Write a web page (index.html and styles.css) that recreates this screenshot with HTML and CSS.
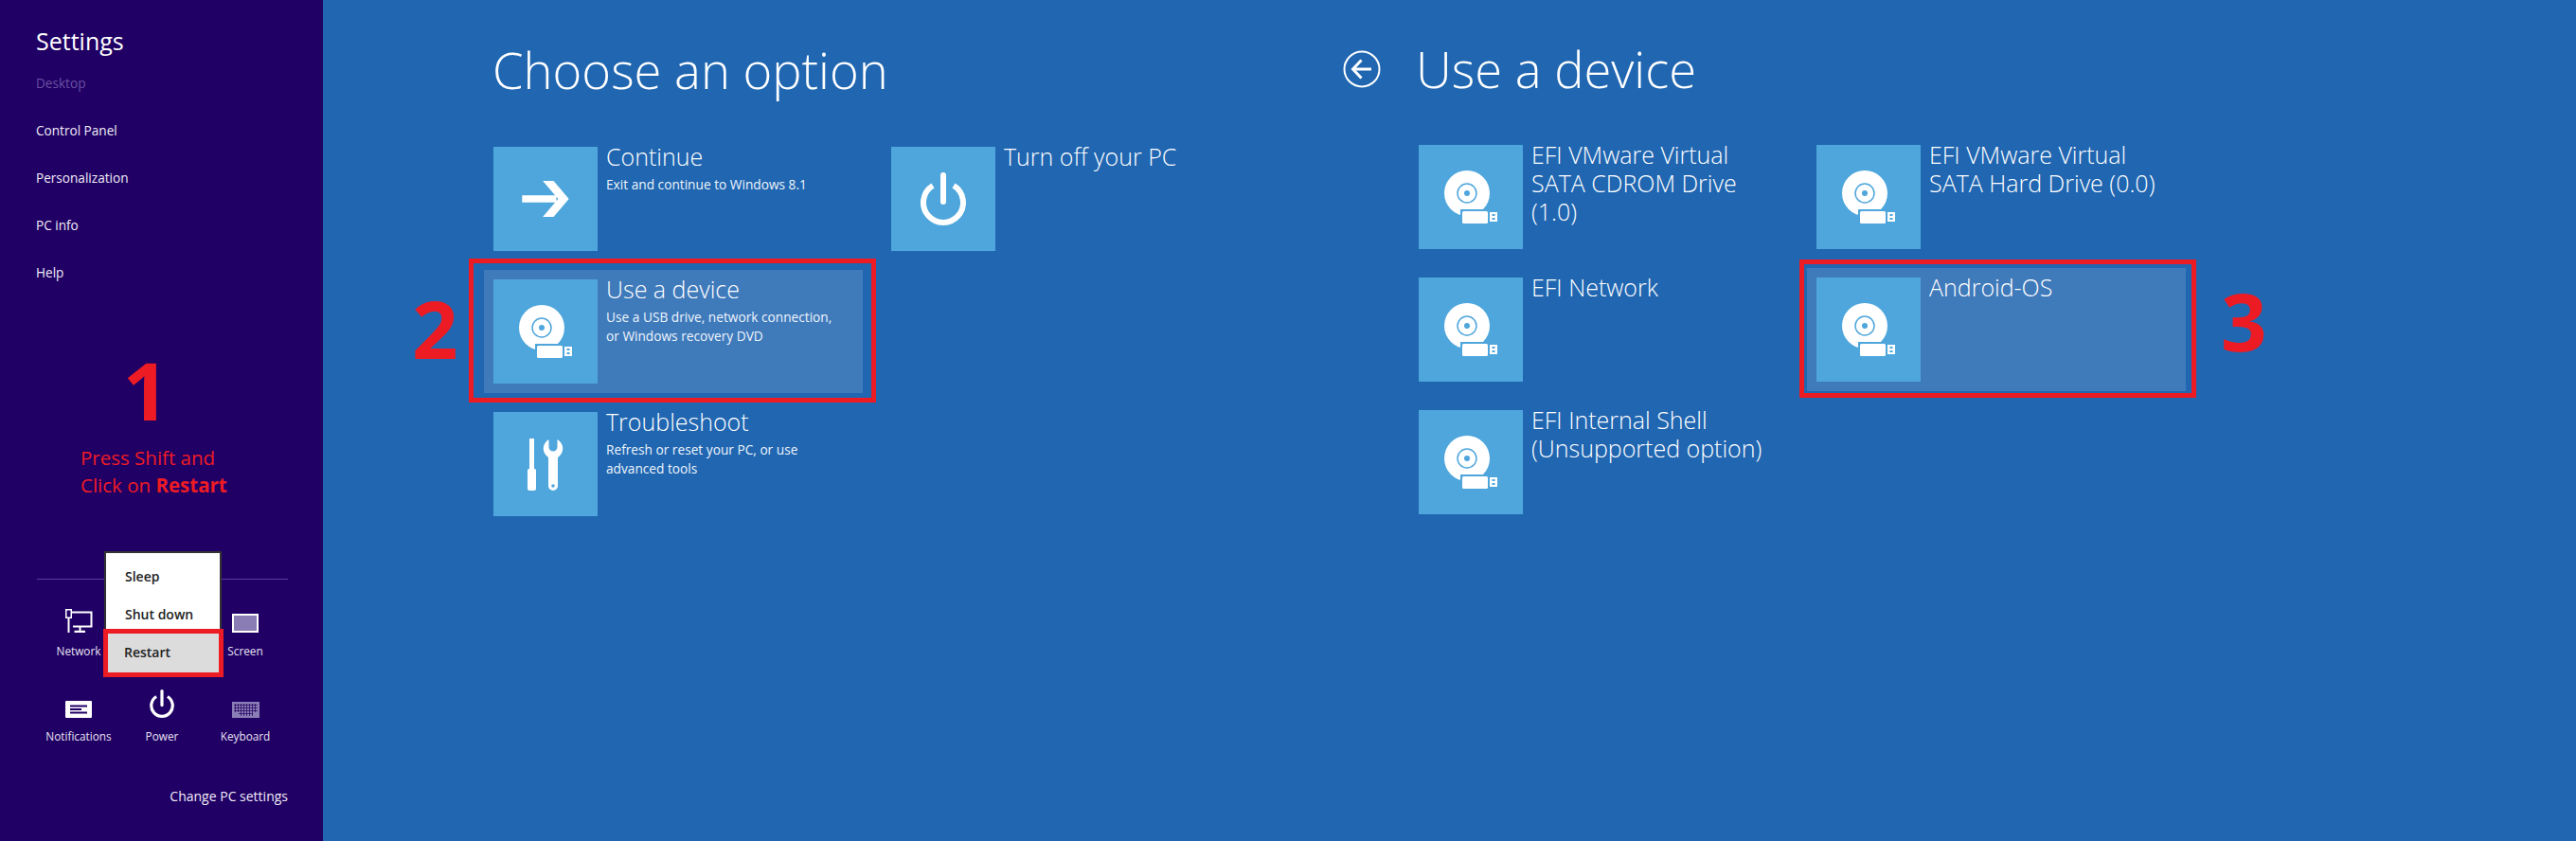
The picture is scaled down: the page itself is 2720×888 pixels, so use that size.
FILE: index.html
```html
<!DOCTYPE html>
<html lang="en">
<head>
  <meta charset="UTF-8" />
  <title>Choose an option</title>
  <link rel="stylesheet" href="styles.css">
</head>
<body>
  <svg class="defs" width="0" height="0">
    <defs>
      <pattern id="keys" width="3" height="3" patternUnits="userSpaceOnUse">
        <path d="M0 .4h3M.4 0v3" stroke="#21005f" stroke-width=".8" fill="none"/>
      </pattern>
    </defs>
    <symbol id="device" viewBox="0 0 56 56">
      <circle cx="24" cy="24" r="24" fill="#fff"/>
      <circle cx="24" cy="24" r="10" fill="none" stroke="#4ea6dc" stroke-width="1.500"/>
      <circle cx="24" cy="24" r="3" fill="#4ea6dc"/>
      <rect x="17" y="41" width="31" height="15" fill="#4ea6dc"/>
      <rect x="19" y="43" width="27" height="13" rx="1.500" fill="#fff"/>
      <path fill="#fff" fill-rule="evenodd" d="M48 44h8v10h-8zm2.500 2v2h3v-2zm0 4v2h3v-2z"/>
    </symbol>
    <symbol id="power" viewBox="0 0 48 56">
      <rect x="21" y="0" width="6" height="34" rx="3" fill="#fff"/>
      <path d="M13 14A21 21 0 1 0 35 14" fill="none" stroke="#fff" stroke-width="6"/>
    </symbol>
  </svg>

  <aside class="charm">
    <h2 class="charm-title">Settings</h2>
    <a class="charm-link dim">Desktop</a>
    <a class="charm-link">Control Panel</a>
    <a class="charm-link">Personalization</a>
    <a class="charm-link">PC info</a>
    <a class="charm-link">Help</a>

    <div class="note">
      <div class="note-num">1</div>
      <p>Press Shift and<br>Click on <b>Restart</b></p>
    </div>

    <div class="charm-bottom">
      <div class="quick">
        <div class="quick-item">
          <svg class="quick-icon" viewBox="0 0 29 25" width="29" height="25">
            <path d="M0 0h7v10H4.500v15h-2V10H0zm1.500 1.500v7h4v-7z" fill="#fff" fill-rule="evenodd"/>
            <path d="M7 3.500h20.500v15H8" fill="none" stroke="#fff" stroke-width="2"/>
            <path d="M14.500 19h2v4h-2zM9.500 22.800H21V25H9.500z" fill="#fff"/>
          </svg>
          <span>Network</span>
        </div>
        <div class="quick-item"></div>
        <div class="quick-item">
          <svg class="quick-icon" viewBox="0 0 28 20" width="28" height="20">
            <rect x="1" y="1" width="26" height="18" fill="#8a7cb4" stroke="#fff" stroke-width="2"/>
          </svg>
          <span>Screen</span>
        </div>
        <div class="quick-item">
          <svg class="quick-icon" viewBox="0 0 28 18" width="28" height="18">
            <path d="M0 1a1 1 0 0 1 1-1h26a1 1 0 0 1 1 1v16a1 1 0 0 1-1 1H1a1 1 0 0 1-1-1zM5 4.500v2h18v-2zm0 3.500v2h12V8zm0 3.500v2h18v-2z" fill="#fff" fill-rule="evenodd"/>
          </svg>
          <span>Notifications</span>
        </div>
        <div class="quick-item">
          <svg class="quick-icon" width="26" height="30"><use href="#power"/></svg>
          <span>Power</span>
        </div>
        <div class="quick-item">
          <svg class="quick-icon" viewBox="0 0 29 17" width="29" height="17">
            <rect width="29" height="17" fill="#8a7cb4"/>
            <rect x="2" y="2" width="25" height="9" fill="url(#keys)"/>
            <rect x="7" y="11" width="15" height="4" fill="url(#keys)"/>
          </svg>
          <span>Keyboard</span>
        </div>
      </div>
      <a class="change-link">Change PC settings</a>
    </div>

    <div class="power-menu">
      <div class="power-row">Sleep</div>
      <div class="power-row">Shut down</div>
      <div class="power-row restart">Restart</div>
    </div>
  </aside>

  <main class="panels">
    <section class="panel panel-options">
      <h1 class="panel-title">Choose an option</h1>
      <div class="tiles">
        <div class="tiles-col">
          <div class="tile">
            <div class="tile-icon">
              <svg viewBox="0 0 52 40" width="52" height="38">
                <path d="M0 16h38v8H0zM23 0h12l17 20-17 20H23l17-20z" fill="#fff"/>
              </svg>
            </div>
            <div class="tile-text">
              <h3>Continue</h3>
              <p>Exit and continue to Windows 8.1</p>
            </div>
          </div>
          <div class="tile picked">
            <div class="tile-icon"><svg width="56" height="56"><use href="#device"/></svg></div>
            <div class="tile-text">
              <h3>Use a device</h3>
              <p>Use a USB drive, network connection,<br>or Windows recovery DVD</p>
            </div>
            <span class="red-frame frame-2"></span>
            <span class="step step-2">2</span>
          </div>
          <div class="tile">
            <div class="tile-icon">
              <svg viewBox="0 0 38 55" width="38" height="55">
                <path d="M2 0h5v32h.5a1.500 1.500 0 0 1 1.500 1.500V53a2 2 0 0 1-2 2H2a2 2 0 0 1-2-2V33.500A1.500 1.500 0 0 1 1.500 32H2z" fill="#fff"/>
                <path fill="#fff" fill-rule="evenodd" d="M22.500 1A11 11 0 0 0 22 20V50a5 5 0 0 0 10 0V20A11 11 0 0 0 31.500 1V9a4.500 4.500 0 0 1-9 0zM27 48.200a1.800 1.800 0 1 1 0 3.600 1.800 1.800 0 0 1 0-3.600z"/>
              </svg>
            </div>
            <div class="tile-text">
              <h3>Troubleshoot</h3>
              <p>Refresh or reset your PC, or use<br>advanced tools</p>
            </div>
          </div>
        </div>
        <div class="tiles-col">
          <div class="tile">
            <div class="tile-icon"><svg width="48" height="56"><use href="#power"/></svg></div>
            <div class="tile-text"><h3>Turn off your PC</h3></div>
          </div>
        </div>
      </div>
    </section>

    <section class="panel panel-device">
      <header class="device-head">
        <svg class="back" viewBox="0 0 40 40" width="40" height="40">
          <circle cx="20" cy="20" r="18.500" fill="none" stroke="#fff" stroke-width="2"/>
          <path d="M11 18.500h19v3H11z" fill="#fff"/>
          <path d="M19.500 10.500L10.500 20l9 9.500" fill="none" stroke="#fff" stroke-width="3"/>
        </svg>
        <h1 class="panel-title">Use a device</h1>
      </header>
      <div class="tiles">
        <div class="tiles-col">
          <div class="tile">
            <div class="tile-icon"><svg width="56" height="56"><use href="#device"/></svg></div>
            <div class="tile-text"><h3>EFI VMware Virtual SATA CDROM Drive (1.0)</h3></div>
          </div>
          <div class="tile">
            <div class="tile-icon"><svg width="56" height="56"><use href="#device"/></svg></div>
            <div class="tile-text"><h3>EFI Network</h3></div>
          </div>
          <div class="tile">
            <div class="tile-icon"><svg width="56" height="56"><use href="#device"/></svg></div>
            <div class="tile-text"><h3>EFI Internal Shell (Unsupported option)</h3></div>
          </div>
        </div>
        <div class="tiles-col">
          <div class="tile">
            <div class="tile-icon"><svg width="56" height="56"><use href="#device"/></svg></div>
            <div class="tile-text"><h3>EFI VMware Virtual SATA Hard Drive (0.0)</h3></div>
          </div>
          <div class="tile picked">
            <div class="tile-icon"><svg width="56" height="56"><use href="#device"/></svg></div>
            <div class="tile-text"><h3>Android-OS</h3></div>
            <span class="red-frame frame-3"></span>
            <span class="step step-3">3</span>
          </div>
        </div>
      </div>
    </section>
  </main>
</body>
</html>
```

FILE: styles.css
```css
* {
  box-sizing: border-box;
}

html, body {
  margin: 0;
  height: 100%;
}

body {
  display: flex;
  width: 2720px;
  height: 888px;
  overflow: hidden;
  font-family: 'Open Sans', 'Liberation Sans', sans-serif;
  color: #fff;
  background: #2066b1;
}

.defs {
  position: absolute;
}

/* settings charm */
.charm {
  position: relative;
  flex: 0 0 341px;
  display: flex;
  flex-direction: column;
  padding: 23px 37px 0 38px;
  background: #200064;
}

.charm-title {
  margin: 0 0 15px;
  font-size: 25px;
  line-height: 40px;
  font-weight: 400;
}

.charm-link {
  height: 50px;
  font-size: 13.600px;
  line-height: 20px;
  color: #f0ecf8;
}

.charm-link.dim {
  color: #6a50a3;
}

.note {
  margin-top: 38px;
  margin-left: 47px;
  color: #ed1c24;
}

.note-num {
  width: 136px;
  margin-left: 1px;
  font-size: 85px;
  line-height: 90px;
  font-weight: 700;
  text-align: center;
}

.note p {
  margin: 13px 0 0;
  font-size: 20.500px;
  line-height: 29px;
}

.charm-bottom {
  position: absolute;
  left: 39px;
  right: 37px;
  top: 611px;
  border-top: 1px solid #5a3e9a;
}

.quick {
  display: grid;
  grid-template-columns: repeat(3, 88px);
  grid-auto-rows: 90px;
  margin-top: 22px;
}

.quick-item {
  display: flex;
  flex-direction: column;
  align-items: center;
  justify-content: flex-end;
  height: 62px;
  font-size: 11.800px;
  line-height: 18px;
  color: #e8e2f3;
}

.quick-icon {
  margin-bottom: 10px;
}

.change-link {
  display: block;
  margin-top: 17px;
  font-size: 14px;
  line-height: 20px;
  text-align: right;
  color: #f0ecf8;
}

.power-menu {
  position: absolute;
  left: 110px;
  top: 582px;
  width: 124px;
  padding-top: 5px;
  background: #fff;
  border: 2px solid #333;
  border-bottom: none;
}

.power-row {
  height: 40px;
  padding-left: 20px;
  font-size: 14px;
  line-height: 40px;
  font-weight: 600;
  color: #222;
}

.power-row.restart {
  height: 51px;
  margin: -5px -4px 0 -3px;
  padding-left: 17px;
  line-height: 40px;
  background: #dcdcdc;
  border: 5px solid #ed1c24;
}

/* panels on the right */
.panels {
  flex: 1;
  display: flex;
}

.panel {
  flex: none;
}

.panel-options {
  width: 972px;
  padding: 38px 0 0 180px;
}

.panel-device {
  padding: 37px 0 0 105px;
}

.panel-title {
  margin: 0;
  font-size: 52.500px;
  line-height: 72px;
  font-weight: 300;
}

.panel-options .panel-title {
  margin: 0 0 35px -1px;
}

.device-head {
  display: flex;
  align-items: center;
  gap: 37px;
  height: 72px;
  margin-bottom: 34px;
}

.panel-device .tiles {
  margin-left: 80px;
}

.tiles {
  display: flex;
  gap: 20px;
}

.tiles-col {
  flex: none;
  display: flex;
  flex-direction: column;
  gap: 10px;
  width: 400px;
}

.tile {
  position: relative;
  display: flex;
  width: 400px;
  height: 130px;
  padding: 10px;
  margin-left: -10px;
}

.tile.picked {
  background: #3f7abb;
}

.tile-icon {
  flex: 0 0 110px;
  height: 110px;
  display: flex;
  align-items: center;
  justify-content: center;
  background: #4ea6dc;
}

.tile-text {
  padding-left: 9px;
  margin-top: -5px;
}

.tile-text h3 {
  margin: 0;
  font-size: 25px;
  line-height: 30px;
  font-weight: 300;
}

.tile-text p {
  margin: 5px 0 0;
  font-size: 13.700px;
  line-height: 20px;
  color: #eef5fb;
}

.red-frame {
  position: absolute;
  border: 5px solid #ed1c24;
}

.frame-2 {
  left: -16px;
  right: -14px;
  top: -12px;
  bottom: -10px;
}

.frame-3 {
  left: -8px;
  right: -11px;
  top: -9px;
  bottom: -7px;
}

.step {
  position: absolute;
  font-size: 85px;
  line-height: 90px;
  font-weight: 700;
  color: #ed1c24;
}

.step-2 {
  left: -76px;
  top: 16px;
}

.step-3 {
  left: 437px;
  top: 10px;
}
```
